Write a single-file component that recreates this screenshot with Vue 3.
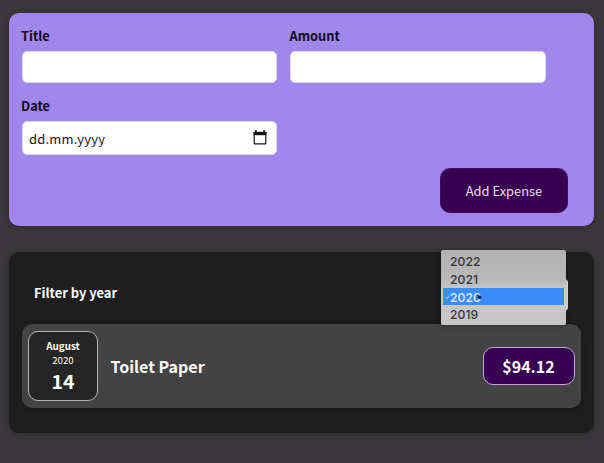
<script setup>
import { ref } from 'vue'

const title = ref('')
const amount = ref('')
const years = ['2022', '2021', '2020', '2019']
const selectedYear = ref('2020')
const expenses = [
  { month: 'August', year: '2020', day: '14', title: 'Toilet Paper', price: '$94.12' },
]
</script>

<template>
  <main class="page">
    <form class="new-expense" @submit.prevent>
      <div class="controls">
        <label class="control">
          <span class="label">Title</span>
          <input v-model="title" class="field" type="text" />
        </label>
        <label class="control">
          <span class="label">Amount</span>
          <input v-model="amount" class="field" type="text" />
        </label>
        <div class="control">
          <span class="label">Date</span>
          <div class="field date-field">
            <span>dd.mm.yyyy</span>
            <svg class="calendar" viewBox="0 0 14 15" width="14" height="15">
              <path d="M1.2 2.5h11.6v11.3H1.2z" fill="none" stroke="#17151b" stroke-width="1.2" stroke-linejoin="round" />
              <path d="M.6 1.8h12.8v3.4H.6z" fill="#17151b" />
              <path d="M2.9 0v3M11.1 0v3" stroke="#17151b" stroke-width="1.5" />
            </svg>
          </div>
        </div>
      </div>
      <div class="actions">
        <button class="add" type="submit">Add Expense</button>
      </div>
    </form>

    <section class="expenses">
      <div class="filter">
        <span class="filter-label">Filter by year</span>
        <div class="select">
          <ul class="menu">
            <li
              v-for="year in years"
              :key="year"
              class="option"
              :class="{ selected: year === selectedYear }"
              @click="selectedYear = year"
            >
              <svg v-if="year === selectedYear" class="check" viewBox="0 0 6 6" width="5" height="6">
                <path d="M.6 3.4l1.5 1.6L5.2 1" fill="none" stroke="#c5dcff" stroke-width="1" />
              </svg>
              {{ year }}
            </li>
          </ul>
          <svg class="pointer" viewBox="0 0 5 6" width="5" height="6">
            <path d="M.3.3L4.6 2.8 3.4 5.2.9 4.6z" fill="#10233f" />
          </svg>
        </div>
      </div>

      <article v-for="expense in expenses" :key="expense.title" class="item">
        <div class="date">
          <span class="month">{{ expense.month }}</span>
          <span class="year">{{ expense.year }}</span>
          <span class="day">{{ expense.day }}</span>
        </div>
        <h2 class="name">{{ expense.title }}</h2>
        <div class="price">{{ expense.price }}</div>
      </article>
    </section>
  </main>
</template>

<style>
body {
  background: #3a383b;
}
</style>

<style scoped>
.page {
  box-sizing: border-box;
  height: 463px;
  padding: 13px 10px 0 8.5px;
  font-family: "Noto Sans CJK JP", "Noto Sans", sans-serif;
  color: #fff;
}

.new-expense {
  box-sizing: border-box;
  height: 213px;
  padding: 13px;
  border-radius: 10px;
  background: #a087ec;
  box-shadow: 0 1px 6px rgba(0, 0, 0, 0.25);
}

.controls {
  display: grid;
  grid-template-columns: 255.5px 255.5px;
  column-gap: 13px;
  row-gap: 12.5px;
}

.control {
  display: flex;
  flex-direction: column;
  gap: 6px;
}

.label {
  margin-left: -0.5px;
  font-size: 12.8px;
  font-weight: 700;
  line-height: 19px;
  color: #130a25;
}

.field {
  box-sizing: border-box;
  width: 100%;
  height: 32px;
  padding: 0 7px;
  border: 1px solid #dcd5f5;
  border-radius: 5px;
  background: #fff;
  font: inherit;
  font-size: 13px;
  outline: none;
}

.date-field {
  display: flex;
  align-items: center;
  justify-content: space-between;
  height: 34px;
  padding: 2px 9px 0 6.5px;
  font-size: 13px;
  letter-spacing: 0.2px;
  color: #17151b;
}

.calendar {
  display: block;
  margin-top: -3px;
}

.actions {
  display: flex;
  justify-content: flex-end;
  margin-top: 13px;
  padding-right: 13px;
}

.add {
  width: 128px;
  height: 45.5px;
  padding: 1px 0 0;
  border: 1px solid #400b68;
  border-radius: 10px;
  background: #380052;
  font: inherit;
  font-size: 12.9px;
  color: #e9dff0;
}

.expenses {
  box-sizing: border-box;
  height: 181px;
  margin-top: 26px;
  padding: 13px 13px 0;
  border-radius: 10px;
  background: #1e1e1e;
  box-shadow: 0 1px 6px rgba(0, 0, 0, 0.25);
}

.filter {
  display: flex;
  align-items: center;
  justify-content: space-between;
  height: 59px;
  padding: 0 13px 0 12.5px;
}

.filter-label {
  padding-bottom: 5px;
  font-size: 12.9px;
  font-weight: 700;
}

.select {
  position: relative;
  width: 127px;
  height: 32px;
  border-radius: 4px;
  background: #e7e7e7;
}

.menu {
  position: absolute;
  top: -28.5px;
  left: -0.5px;
  z-index: 1;
  box-sizing: border-box;
  width: 125.5px;
  height: 75px;
  margin: 0;
  padding: 2px;
  list-style: none;
  border-radius: 2px;
  background: linear-gradient(#b2b2b2, #b8b8b8 40%, #cbcbcb 55%, #c4c4c4);
  box-shadow: 0 1px 4px rgba(0, 0, 0, 0.35);
  font-family: Inter, sans-serif;
  font-size: 12.2px;
  font-weight: 500;
  color: #363636;
}

.option {
  position: relative;
  height: 17.75px;
  padding-left: 7.5px;
  line-height: 19px;
}

.selected {
  background: #3b8cfb;
  color: #e3efff;
}

.check {
  position: absolute;
  top: 6px;
  left: 2px;
}

.pointer {
  position: absolute;
  top: 15px;
  left: 36px;
  z-index: 2;
}

.item {
  box-sizing: border-box;
  display: flex;
  align-items: center;
  height: 83.5px;
  padding: 6.5px;
  border-radius: 10px;
  background: #434343;
  box-shadow: 0 1px 6px rgba(0, 0, 0, 0.25);
}

.date {
  box-sizing: border-box;
  display: flex;
  flex-direction: column;
  align-items: center;
  width: 70px;
  height: 70.5px;
  padding-top: 7px;
  border: 1px solid #b4b4b4;
  border-radius: 10px;
  background: #252525;
}

.month {
  font-size: 9.9px;
  font-weight: 700;
  line-height: 14px;
}

.year {
  font-size: 9.7px;
  line-height: 14px;
}

.day {
  font-size: 19.5px;
  font-weight: 700;
  line-height: 28px;
}

.name {
  flex: 1;
  margin: 0 0 0 12.5px;
  font-size: 16px;
  font-weight: 700;
  line-height: 24px;
}

.price {
  box-sizing: border-box;
  width: 92px;
  height: 38px;
  border: 1px solid #c3a9d0;
  border-radius: 10px;
  background: #380052;
  font-size: 16px;
  font-weight: 700;
  line-height: 36px;
  text-align: center;
}
</style>
